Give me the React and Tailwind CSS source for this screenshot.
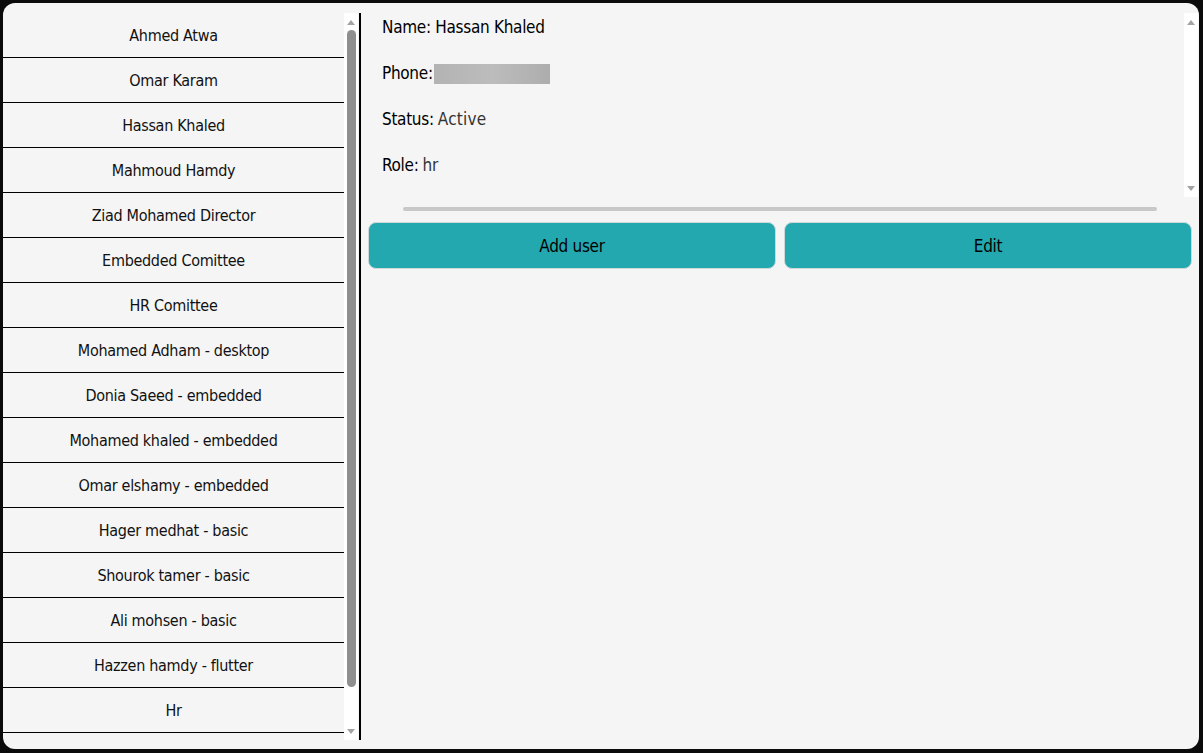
import React from "react";

const users = [
  "Ahmed Atwa",
  "Omar Karam",
  "Hassan Khaled",
  "Mahmoud Hamdy",
  "Ziad Mohamed Director",
  "Embedded Comittee",
  "HR Comittee",
  "Mohamed Adham - desktop",
  "Donia Saeed - embedded",
  "Mohamed khaled - embedded",
  "Omar elshamy - embedded",
  "Hager medhat - basic",
  "Shourok tamer - basic",
  "Ali mohsen - basic",
  "Hazzen hamdy - flutter",
  "Hr",
];

const ArrowUp = () => (
  <svg width="8" height="5" viewBox="0 0 8 5">
    <path d="M4 0 L8 5 L0 5 Z" fill="#a3a3a3" />
  </svg>
);

const ArrowDown = () => (
  <svg width="8" height="5" viewBox="0 0 8 5">
    <path d="M0 0 L8 0 L4 5 Z" fill="#a3a3a3" />
  </svg>
);

const FakeScrollbar = ({ thumb }) => (
  <div className="w-[14px] h-full bg-white flex flex-col items-center">
    <div className="h-[17px] flex items-center justify-center pt-[2px]">
      <ArrowUp />
    </div>
    <div className="flex-1 w-full flex justify-center">
      {thumb && (
        <div className="w-[9px] h-[657px] bg-[#8f8f8f] rounded-full" />
      )}
    </div>
    <div className="h-[16px] flex items-center justify-center pb-[2px]">
      <ArrowDown />
    </div>
  </div>
);

const Row = ({ label, children }) => (
  <div className="h-[46px] flex items-center text-[17px] tracking-[-0.3px] text-black">
    <span>{label}</span>
    {children}
  </div>
);

export default function App() {
  return (
    <div
      className="w-[1203px] h-[753px] bg-[#0b0b0b] pt-[3px] pb-[4px] pl-[3px] pr-[4px] overflow-hidden"
      style={{ fontFamily: '"DejaVu Sans Condensed", "Liberation Sans", sans-serif' }}
    >
      <div className="w-full h-full bg-[#f5f5f5] rounded-[12px] flex overflow-hidden">
        {/* users list */}
        <div className="flex pt-[10px] pb-[9px] h-full">
          <div className="w-[341px] h-full overflow-hidden">
            {users.map((u) => (
              <div
                key={u}
                className="h-[45px] pt-[2px] border-b border-black flex items-center justify-center text-[16px] tracking-[-0.3px] text-[#111]"
              >
                {u}
              </div>
            ))}
          </div>
          <div className="h-full">
            <FakeScrollbar thumb />
          </div>
          <div className="w-[1px]" />
          <div className="w-[2px] h-full bg-black" />
        </div>

        {/* details */}
        <div className="flex-1 flex flex-col pt-[10px] px-[7px]">
          <div className="h-[184px] flex -mr-[6px]">
            <div className="flex-1 flex flex-col pl-[14px] -mt-[8px]">
              <Row label="Name: Hassan Khaled" />
              <Row label="Phone:">
                <span className="ml-[1px] w-[116px] h-[20px] bg-gradient-to-r from-[#b3b3b3] via-[#bcbcbc] to-[#adadad]" />
              </Row>
              <Row label="Status:">
                <span className="ml-[4px] text-[#333] tracking-[0.2px]">Active</span>
              </Row>
              <Row label="Role:">
                <span className="ml-[4px] text-[#333]">hr</span>
              </Row>
            </div>
            <div className="h-full">
              <FakeScrollbar />
            </div>
          </div>
          <div className="pl-[35px] pr-[35px] mt-[10px]">
            <div className="h-[4px] rounded-full bg-[#c8c8c8]" />
          </div>
          <div className="flex gap-[8px] mt-[11px]">
            <button className="flex-1 h-[47px] pt-[2px] rounded-[8px] bg-[#23a8b0] border border-[#cfd8d8] text-[17px] tracking-[-0.3px] text-black">
              Add user
            </button>
            <button className="flex-1 h-[47px] pt-[2px] rounded-[8px] bg-[#23a8b0] border border-[#cfd8d8] text-[17px] tracking-[-0.3px] text-black">
              Edit
            </button>
          </div>
        </div>
      </div>
    </div>
  );
}
